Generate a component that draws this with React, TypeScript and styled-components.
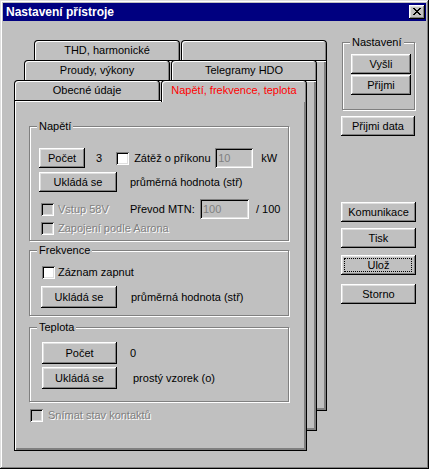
import styled, { createGlobalStyle } from 'styled-components';

const GlobalStyle = createGlobalStyle`
  html, body {
    margin: 0;
    padding: 0;
    background: #c0c0c0;
  }
  body {
    font-family: 'Liberation Sans', Arial, sans-serif;
    font-size: 11px;
    color: #000;
  }
`;

const Window = styled.div`
  box-sizing: border-box;
  width: 429px;
  height: 469px;
  padding: 3px;
  background: #c0c0c0;
  box-shadow: inset -1px -1px #000, inset 1px 1px #dfdfdf,
    inset -2px -2px #808080, inset 2px 2px #fff;
  display: flex;
  flex-direction: column;
`;

const TitleBar = styled.div`
  height: 18px;
  flex: none;
  background: #000080;
  color: #fff;
  display: flex;
  align-items: center;
  justify-content: space-between;
  padding: 0 1px 0 3px;
  font-size: 12px;
  font-weight: bold;
`;

const CloseButton = styled.div`
  box-sizing: border-box;
  width: 16px;
  height: 14px;
  background: #c0c0c0;
  box-shadow: inset -1px -1px #000, inset 1px 1px #fff,
    inset -2px -2px #808080, inset 2px 2px #dfdfdf;
  display: flex;
  align-items: center;
  justify-content: center;
  padding: 0 1px 1px 0;
`;

const Main = styled.div`
  display: flex;
  align-items: flex-start;
  padding: 19px 0 0 11px;
`;

const Stack = styled.div`
  display: grid;
  width: 313px;
`;

const Page = styled.div<{ $x: number; $y: number }>`
  grid-area: 1 / 1;
  width: 293px;
  height: 371px;
  margin: ${(p) => p.$y}px 0 0 ${(p) => p.$x}px;
  display: flex;
  flex-direction: column;
`;

const TabRow = styled.div`
  display: flex;
  gap: 1px;
  height: 20px;
  flex: none;
`;

const Tab = styled.div<{ $active?: boolean }>`
  flex: 1;
  box-sizing: border-box;
  height: ${(p) => (p.$active ? 22 : 20)}px;
  position: relative;
  z-index: ${(p) => (p.$active ? 1 : 0)};
  border: 1px solid #000;
  border-bottom: none;
  border-radius: 4px 4px 0 0;
  background: #c0c0c0;
  box-shadow: inset 1px 1px #fff, inset -1px 0 #808080;
  display: flex;
  align-items: flex-start;
  justify-content: center;
  padding-top: 3px;
  color: ${(p) => (p.$active ? '#ff0000' : '#000')};
  white-space: nowrap;
`;

const PageBody = styled.div`
  flex: 1;
  box-sizing: border-box;
  border: 1px solid #000;
  background: #c0c0c0;
  box-shadow: inset 1px 1px #fff, inset -2px -2px #808080;
  padding-left: 14px;
  display: flex;
  flex-direction: column;
`;

const Group = styled.div<{ $w: number; $mt: number; $pt: number; $pb: number; $ml?: number }>`
  position: relative;
  box-sizing: border-box;
  width: ${(p) => p.$w}px;
  margin: ${(p) => p.$mt}px 0 0 ${(p) => p.$ml ?? 0}px;
  padding: ${(p) => p.$pt}px 0 ${(p) => p.$pb}px;
  border: 1px solid #808080;
  box-shadow: inset 1px 1px #fff, 1px 1px #fff;
  display: flex;
  flex-direction: column;
`;

const GroupTitle = styled.span`
  position: absolute;
  top: -7px;
  left: 7px;
  padding: 0 2px;
  line-height: 13px;
  background: #c0c0c0;
`;

const Row = styled.div<{ $h: number; $mt?: number; $pl: number }>`
  display: flex;
  align-items: center;
  height: ${(p) => p.$h}px;
  margin-top: ${(p) => p.$mt ?? 0}px;
  padding-left: ${(p) => p.$pl}px;
`;

const Button = styled.button<{ $w: number; $h: number; $mt?: number; $ml?: number; $focus?: boolean }>`
  position: relative;
  box-sizing: border-box;
  flex: none;
  width: ${(p) => p.$w}px;
  height: ${(p) => p.$h}px;
  margin: ${(p) => p.$mt ?? 0}px 0 0 ${(p) => p.$ml ?? 0}px;
  padding: 0 0 1px;
  font: inherit;
  color: #000;
  background: #c0c0c0;
  border: none;
  box-shadow: inset -1px -1px #000, inset 1px 1px #fff,
    inset -2px -2px #808080, inset 2px 2px #dfdfdf;
  display: flex;
  align-items: center;
  justify-content: center;

  &::after {
    content: '';
    display: ${(p) => (p.$focus ? 'block' : 'none')};
    position: absolute;
    inset: 3px 4px 3px 3px;
    border: 1px dotted #000;
  }
`;

const Check = styled.span<{ $off?: boolean; $ml?: number }>`
  box-sizing: border-box;
  flex: none;
  width: 13px;
  height: 13px;
  margin-left: ${(p) => p.$ml ?? 0}px;
  background: ${(p) => (p.$off ? '#c0c0c0' : '#fff')};
  box-shadow: inset 1px 1px #808080, inset -1px -1px #fff,
    inset 2px 2px #000, inset -2px -2px #dfdfdf;
`;

const Label = styled.span<{ $ml?: number; $w?: number; $off?: boolean }>`
  flex: none;
  margin-left: ${(p) => p.$ml ?? 0}px;
  width: ${(p) => (p.$w ? `${p.$w}px` : 'auto')};
  white-space: nowrap;
  color: ${(p) => (p.$off ? '#808080' : '#000')};
  text-shadow: ${(p) => (p.$off ? '1px 1px 0 #fff' : 'none')};
`;

const Field = styled.span<{ $w: number }>`
  box-sizing: border-box;
  flex: none;
  width: ${(p) => p.$w}px;
  height: 20px;
  padding: 0 0 0 3px;
  background: #c0c0c0;
  color: #808080;
  box-shadow: inset 1px 1px #808080, inset -1px -1px #fff,
    inset 2px 2px #000, inset -2px -2px #dfdfdf;
  display: flex;
  align-items: center;
`;

const Side = styled.div`
  width: 75px;
  margin-left: 14px;
  display: flex;
  flex-direction: column;
`;

const CloseGlyph = () => (
  <svg width='8' height='7' viewBox='0 0 8 7' shapeRendering='crispEdges'>
    <path
      fill='#000'
      d='M0 0h2v1H0zM6 0h2v1H6zM1 1h2v1H1zM5 1h2v1H5zM2 2h4v1H2zM3 3h2v1H3zM2 4h4v1H2zM1 5h2v1H1zM5 5h2v1H5zM0 6h2v1H0zM6 6h2v1H6z'
    />
  </svg>
);

const pages = [
  { x: 20, y: 0, tabs: ['THD, harmonické', ''] },
  { x: 10, y: 20, tabs: ['Proudy, výkony', 'Telegramy HDO'] },
];

const App = () => {
  return (
    <>
      <GlobalStyle />
      <Window>
        <TitleBar>
          <span>Nastavení přístroje</span>
          <CloseButton>
            <CloseGlyph />
          </CloseButton>
        </TitleBar>

        <Main>
          <Stack>
            {pages.map((page) => (
              <Page key={page.tabs[0]} $x={page.x} $y={page.y}>
                <TabRow>
                  {page.tabs.map((t) => (
                    <Tab key={t}>{t}</Tab>
                  ))}
                </TabRow>
                <PageBody />
              </Page>
            ))}

            <Page $x={0} $y={40}>
              <TabRow>
                <Tab>Obecné údaje</Tab>
                <Tab $active>Napětí, frekvence, teplota</Tab>
              </TabRow>
              <PageBody>
                <Group $w={260} $mt={25} $pt={21} $pb={3}>
                  <GroupTitle>Napětí</GroupTitle>
                  <Row $h={20} $pl={9}>
                    <Button $w={46} $h={20}>Počet</Button>
                    <Label $ml={11}>3</Label>
                    <Check $ml={14} />
                    <Label $ml={5} $w={81}>Zátěž o příkonu</Label>
                    <Field $w={38}>10</Field>
                    <Label $ml={8}>kW</Label>
                  </Row>
                  <Row $h={20} $mt={4} $pl={9}>
                    <Button $w={78} $h={20}>Ukládá se</Button>
                    <Label $ml={13}>průměrná hodnota (stř)</Label>
                  </Row>
                  <Row $h={20} $mt={7} $pl={11}>
                    <Check $off />
                    <Label $ml={4} $w={72} $off>Vstup 58V</Label>
                    <Label $w={70}>Převod MTN:</Label>
                    <Field $w={49}>100</Field>
                    <Label $ml={7}>/ 100</Label>
                  </Row>
                  <Row $h={18} $pl={11}>
                    <Check $off />
                    <Label $ml={4} $off>Zapojení podle Aarona</Label>
                  </Row>
                </Group>

                <Group $w={260} $mt={9} $pt={12} $pb={7}>
                  <GroupTitle>Frekvence</GroupTitle>
                  <Row $h={18} $pl={12}>
                    <Check />
                    <Label $ml={3}>Záznam zapnut</Label>
                  </Row>
                  <Row $h={22} $mt={5} $pl={11}>
                    <Button $w={76} $h={22}>Ukládá se</Button>
                    <Label $ml={14}>průměrná hodnota (stř)</Label>
                  </Row>
                </Group>

                <Group $w={260} $mt={11} $pt={14} $pb={12}>
                  <GroupTitle>Teplota</GroupTitle>
                  <Row $h={22} $pl={12}>
                    <Button $w={75} $h={22}>Počet</Button>
                    <Label $ml={13}>0</Label>
                  </Row>
                  <Row $h={22} $mt={3} $pl={12}>
                    <Button $w={75} $h={22}>Ukládá se</Button>
                    <Label $ml={16}>prostý vzorek (o)</Label>
                  </Row>
                </Group>

                <Row $h={18} $mt={4} $pl={1}>
                  <Check $off />
                  <Label $ml={5} $off>Snímat stav kontaktů</Label>
                </Row>
              </PageBody>
            </Page>
          </Stack>

          <Side>
            <Group $w={73} $mt={2} $ml={1} $pt={11} $pb={14}>
              <GroupTitle>Nastavení</GroupTitle>
              <Button $w={60} $h={20} $ml={8}>Vyšli</Button>
              <Button $w={60} $h={20} $ml={8} $mt={1}>Přijmi</Button>
            </Group>
            <Button $w={74} $h={20} $mt={6}>Přijmi data</Button>
            <Button $w={75} $h={20} $mt={66}>Komunikace</Button>
            <Button $w={75} $h={20} $mt={6}>Tisk</Button>
            <Button $w={75} $h={20} $mt={7} $focus>Ulož</Button>
            <Button $w={75} $h={20} $mt={9}>Storno</Button>
          </Side>
        </Main>
      </Window>
    </>
  );
};

export default App;
